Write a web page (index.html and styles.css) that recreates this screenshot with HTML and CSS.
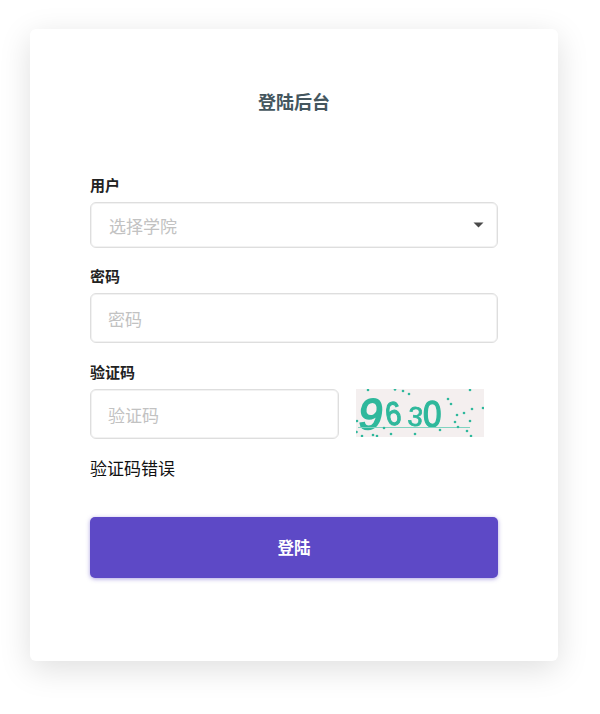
FILE: index.html
```html
<!DOCTYPE html>
<html lang="zh">
<head>
<meta charset="utf-8">
<title>登陆后台</title>
<link rel="stylesheet" href="styles.css">
</head>
<body>
<main class="card">
  <h1 class="title">登陆后台</h1>
  <form class="form">
    <label class="label label-first">用户</label>
    <div class="select">
      <span class="select-text">选择学院</span>
      <svg class="caret" width="11" height="6" viewBox="0 0 11 6"><path d="M0.500 0.500h10L5.500 5.500z" fill="#4a4a4a"/></svg>
    </div>
    <label class="label label-pass">密码</label>
    <div class="input">密码</div>
    <label class="label label-code">验证码</label>
    <div class="code-row">
      <div class="input input-code">验证码</div>
      <svg class="captcha" width="128" height="48" viewBox="0 0 128 48">
        <rect width="128" height="48" fill="#f4efef"/>
        <g class="digits">
          <text class="d1" transform="translate(1 40) skewX(-8)">9</text>
          <text class="d2" transform="translate(31 37) rotate(-8) scale(0.85 1)">6</text>
          <text class="d3" transform="translate(51 36) rotate(6)">3</text>
          <text class="d4" transform="translate(67 38) scale(0.9 1)">0</text>
        </g>
        <path d="M2 38.500H114" stroke="#7fd3c0" stroke-width="1.200" fill="none"/>
        <g class="dots">
          <circle cx="12" cy="1" r="1.300"/><circle cx="39" cy="0.500" r="1.300"/><circle cx="47" cy="2" r="1.300"/><circle cx="53" cy="5" r="1.300"/>
          <circle cx="92" cy="10" r="1.300"/><circle cx="95" cy="15" r="1.300"/><circle cx="114" cy="1" r="1.300"/><circle cx="116" cy="20" r="1.300"/>
          <circle cx="127" cy="19" r="1.300"/><circle cx="101" cy="26" r="1.300"/><circle cx="108" cy="24" r="1.300"/><circle cx="99" cy="33" r="1.300"/>
          <circle cx="102" cy="38" r="1.300"/><circle cx="114" cy="32" r="1.300"/><circle cx="111" cy="42" r="1.300"/><circle cx="115" cy="47" r="1.300"/>
          <circle cx="84" cy="41" r="1.300"/><circle cx="59" cy="45" r="1.300"/><circle cx="35" cy="45" r="1.300"/><circle cx="28" cy="39" r="1.300"/>
          <circle cx="17" cy="46" r="1.300"/><circle cx="21" cy="47" r="1.300"/><circle cx="6" cy="47" r="1.300"/><circle cx="0.500" cy="43" r="1.300"/><circle cx="1" cy="32" r="1.300"/>
        </g>
      </svg>
    </div>
    <p class="error">验证码错误</p>
    <button class="submit" type="button">登陆</button>
  </form>
</main>
</body>
</html>
```
FILE: styles.css
```css
* { box-sizing: border-box; }
html, body { margin: 0; padding: 0; background: #fff; }
body {
  width: 600px;
  height: 714px;
  overflow: hidden;
  padding: 29px 42px 0 30px;
  font-family: "Noto Sans CJK SC", "Noto Sans", sans-serif;
  color: #111;
}
.card {
  width: 528px;
  height: 632px;
  padding: 0 60px;
  background: #fff;
  border-radius: 6px;
  box-shadow: 0 8px 32px rgba(0, 0, 0, 0.13);
}
.title {
  margin: 0;
  padding-top: 59px;
  height: 145px;
  font-size: 18px;
  line-height: 26px;
  font-weight: 700;
  text-align: center;
  color: #44565e;
}
.form { display: flex; flex-direction: column; }
.label {
  display: block;
  font-size: 15px;
  line-height: 22px;
  font-weight: 700;
  color: #222;
}
.label-first { margin-bottom: 6px; }
.label-pass { margin-top: 17px; margin-bottom: 6px; }
.label-code { margin-top: 18px; margin-bottom: 6px; }
.select {
  display: flex;
  align-items: center;
  justify-content: space-between;
  height: 46px;
  padding: 0 13px 0 18px;
  border: 1px solid #dedede;
  box-shadow: inset 0 0 0 1px #f2f2f2;
  border-radius: 6px;
  font-size: 17px;
  color: #c2c2c2;
}
.input {
  display: flex;
  align-items: center;
  height: 50px;
  padding: 0 17px;
  border: 1px solid #dedede;
  box-shadow: inset 0 0 0 1px #f2f2f2;
  border-radius: 6px;
  font-size: 17px;
  color: #c2c2c2;
}
.code-row { display: flex; align-items: flex-start; gap: 17px; }
.input-code { width: 249px; }
.captcha { display: block; flex: none; filter: blur(0.4px); }
.digits { font-family: "Liberation Sans", sans-serif; fill: #2fb89c; stroke: #2fb89c; }
.dots { fill: #2fb89c; }
.d1 { font-size: 43px; stroke-width: 1.800; }
.d2 { font-size: 33px; stroke-width: 1.200; }
.d3 { font-size: 27px; stroke-width: 0.800; }
.d4 { font-size: 37px; stroke-width: 1.300; }
.error {
  margin: 17px 0 0;
  font-size: 17px;
  line-height: 24px;
  color: #111;
}
.submit {
  margin-top: 37px;
  padding-bottom: 2px;
  height: 61px;
  border: 0;
  border-radius: 5px;
  background: #5d49c6;
  box-shadow: 0 1px 4px rgba(93, 73, 198, 0.5);
  color: #fff;
  font: 700 16.500px "Noto Sans CJK SC", "Noto Sans", sans-serif;
}
```
